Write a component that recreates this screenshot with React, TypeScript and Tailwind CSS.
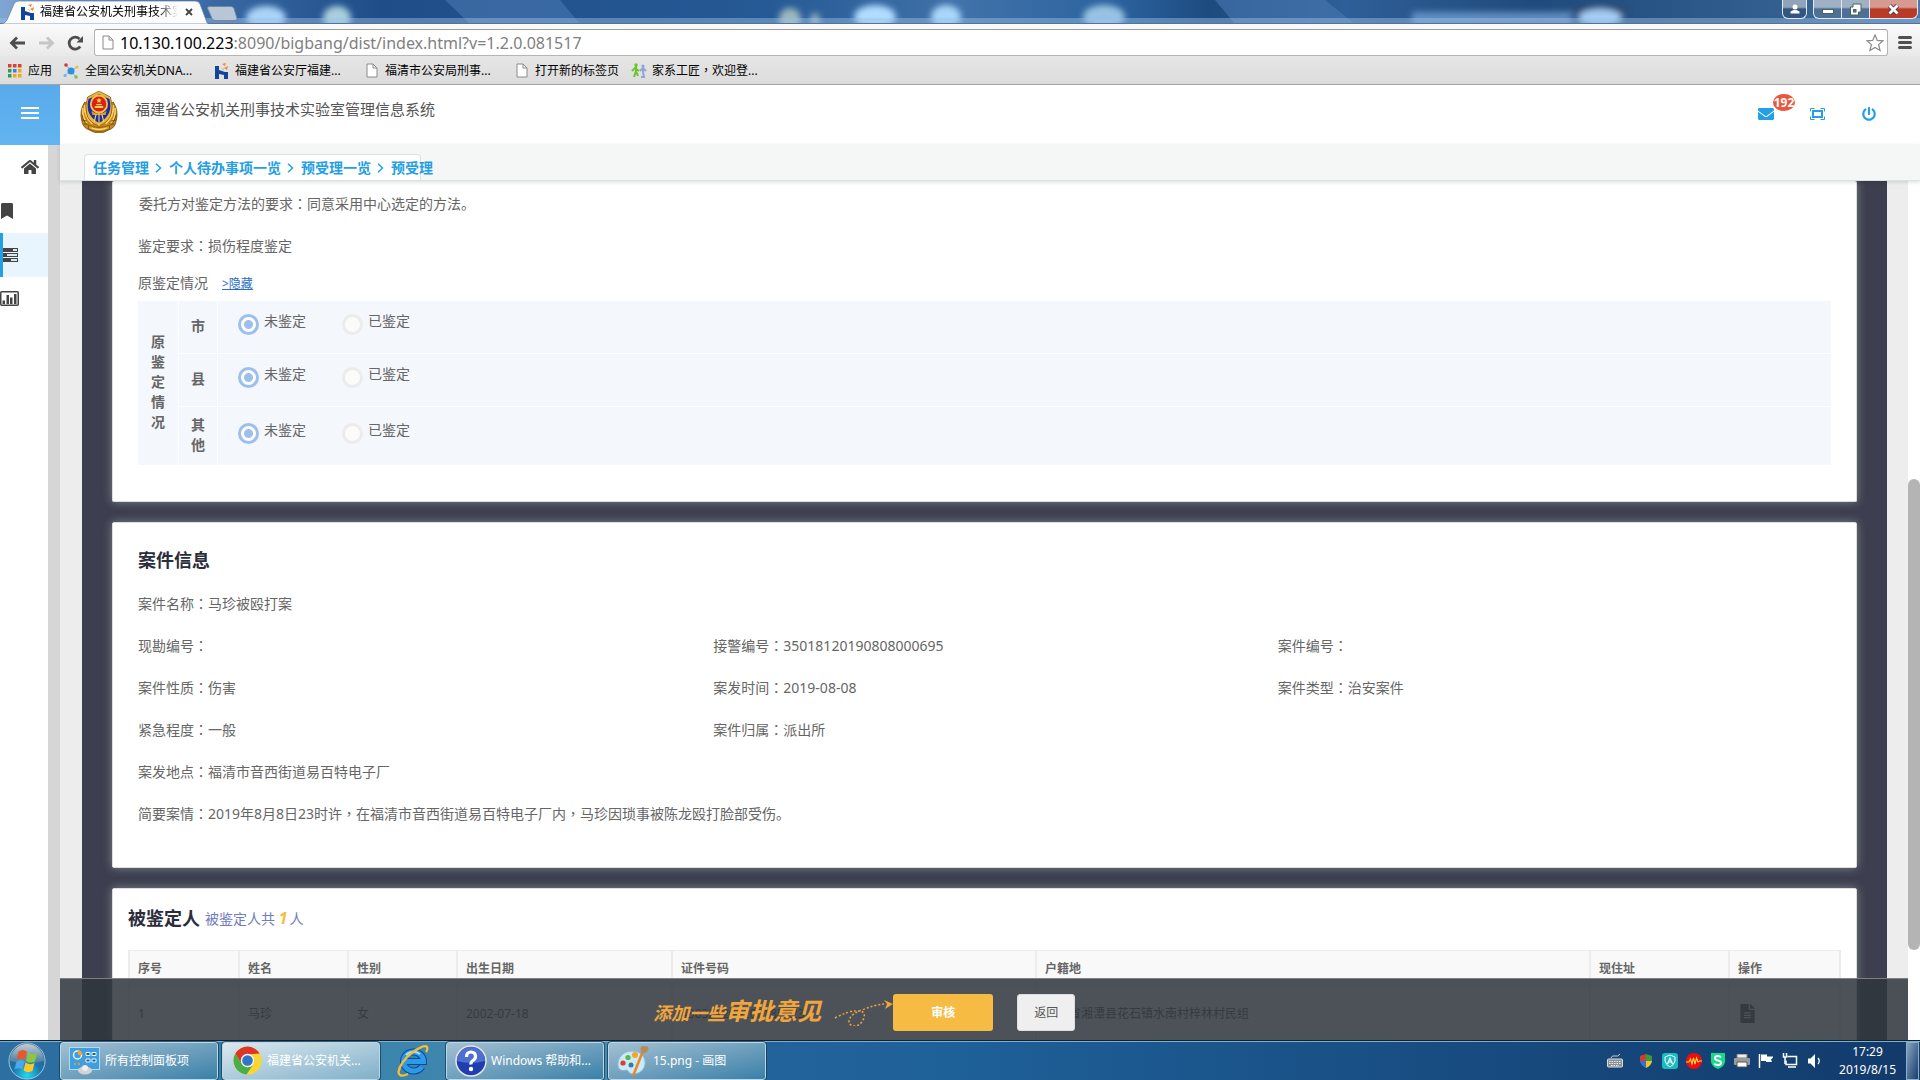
import React from "react";
import { FaHome, FaBookmark, FaEnvelope, FaPowerOff, FaFileAlt } from "react-icons/fa";

/* Full-width colon and comma, centred in their box */
const P = ({ c = "：" }: { c?: string }) => (
  <span className="font-['Noto_Sans_CJK_TC','Noto_Sans_CJK_SC',sans-serif]">{c}</span>
);

const Field = ({ label, children, className = "" }: { label: string; children?: React.ReactNode; className?: string }) => (
  <div className={"h-[42px] whitespace-nowrap leading-10 " + className}>
    {label}
    <P />
    {children}
  </div>
);

/* ---------- browser ---------- */

const HLogo = () => (
  <svg width="14" height="16" viewBox="0 0 14 16" aria-hidden="true">
    <path d="M0 3h4v4l6 2h3v7H9v-4l-5-1v5H0z" fill="#12459a" />
    <path d="M7 1l4-1-1 3zM9 5l4-2-1 4zM7 5l2 1-1 1z" fill="#f08a2c" />
  </svg>
);

const PageIcon = () => (
  <svg width="12" height="15" viewBox="0 0 12 15" aria-hidden="true">
    <path d="M1 1h6l4 4v9H1z" fill="#fff" stroke="#8a8a8a" />
    <path d="M7 1v4h4" fill="none" stroke="#8a8a8a" />
  </svg>
);

const TitleBar = () => (
  <div className="relative flex h-6 shrink-0 items-start overflow-hidden bg-[#2b5b92]">
    <svg className="absolute inset-0 h-full w-full" viewBox="0 0 1920 24" preserveAspectRatio="none" aria-hidden="true">
      <defs>
        <filter id="soft" x="-50%" y="-50%" width="200%" height="200%">
          <feGaussianBlur stdDeviation="3" />
        </filter>
        <linearGradient id="wall" x1="0" x2="1">
          <stop offset="0" stopColor="#7fa6d2" />
          <stop offset=".11" stopColor="#3a69a4" />
          <stop offset=".2" stopColor="#1f4d88" />
          <stop offset=".4" stopColor="#265a95" />
          <stop offset=".5" stopColor="#4172a9" />
          <stop offset=".58" stopColor="#2c639f" />
          <stop offset=".63" stopColor="#1d4b80" />
          <stop offset=".7" stopColor="#2f5f98" />
          <stop offset=".8" stopColor="#1f4a7c" />
          <stop offset=".93" stopColor="#33608f" />
          <stop offset="1" stopColor="#4e78a6" />
        </linearGradient>
      </defs>
      <rect width="1920" height="24" fill="url(#wall)" />
      <path d="M445 0h115l20 24H470zM1215 0h110l30 24h-120z" fill="#4a78b0" opacity=".6" />
      <g filter="url(#soft)">
        <ellipse cx="266" cy="18" rx="20" ry="12" fill="#a9d3f7" />
        <ellipse cx="337" cy="18" rx="14" ry="12" fill="#a8cfdd" />
        <ellipse cx="790" cy="19" rx="11" ry="11" fill="#9cb7bd" />
        <ellipse cx="815" cy="20" rx="5" ry="7" fill="#8fb0bd" />
        <ellipse cx="875" cy="17" rx="21" ry="12" fill="#b0dcff" />
        <ellipse cx="946" cy="17" rx="15" ry="12" fill="#a8d6f8" />
        <ellipse cx="1104" cy="17" rx="21" ry="12" fill="#97c2e2" />
        <rect x="1412" y="12" width="160" height="14" fill="#7ba5d8" opacity=".7" />
        <ellipse cx="1600" cy="11" rx="28" ry="7" fill="#2b4a70" />
        <ellipse cx="1600" cy="18" rx="22" ry="9" fill="#a5cdf5" />
      </g>
      <rect y="18" width="1920" height="5" fill="#9cc0ea" opacity=".45" />
      <rect y="23" width="1920" height="1" fill="#557395" />
    </svg>
    <div className="relative flex h-6 w-[209px] items-center pl-[21px]">
      <svg className="absolute inset-0 h-full w-full" viewBox="0 0 209 24" preserveAspectRatio="none" aria-hidden="true">
        <path d="M0 24q5 0 7-4L14 4q1-3 5-3h176q4 0 5 3l6 16q1 4 3 4z" fill="#fcfcfc" stroke="#5b7da8" strokeWidth=".7" />
      </svg>
      <div className="relative flex items-center">
        <HLogo />
        <span className="ml-[5px] w-[138px] overflow-hidden whitespace-nowrap bg-linear-to-r from-black from-85% to-transparent bg-clip-text text-xs text-transparent">
          福建省公安机关刑事技术实
        </span>
        <button aria-label="关闭标签页" className="ml-[7px]">
          <svg width="8" height="8" viewBox="0 0 8 8"><path d="M1 1l6 6M7 1L1 7" stroke="#444" strokeWidth="1.8" /></svg>
        </button>
      </div>
    </div>
    <button aria-label="新建标签页" className="relative -ml-[2px] mt-1.5">
      <svg width="31" height="15" viewBox="0 0 31 15"><path d="M2 .5h22q2 0 3 2l3 10q0 2-2 2H8q-2 0-3-2L.5 2Q.5.5 2 .5z" fill="#b9c6d6" stroke="#70879f" /></svg>
    </button>
    <div className="relative ml-auto mr-[2px] flex text-white">
      <button aria-label="用户" className="mr-1.5 flex h-[19px] w-[25px] items-center justify-center rounded-b-md border border-t-0 border-slate-200 bg-linear-to-b from-[#91a3b8] from-40% to-[#34567e] to-50%">
        <svg width="12" height="12" viewBox="0 0 12 12"><circle cx="6" cy="4" r="2.5" fill="#fff" /><path d="M1.500 10.500v-2l3-1.500h3l3 1.500v2z" fill="#fff" /></svg>
      </button>
      <button aria-label="最小化" className="flex h-[19px] w-[29px] items-center justify-center rounded-bl-md border border-t-0 border-slate-200 bg-linear-to-b from-[#a0b1c5] from-40% to-[#4f7094] to-50%">
        <svg width="12" height="12" viewBox="0 0 12 12"><rect x=".5" y="6.500" width="11" height="4" fill="#fff" stroke="#465" /></svg>
      </button>
      <button aria-label="还原" className="flex h-[19px] w-[27px] items-center justify-center border-b border-slate-200 bg-linear-to-b from-[#a0b1c5] from-40% to-[#4f7094] to-50%">
        <svg width="13" height="13" viewBox="0 0 13 13"><path d="M4 1h8v8H9.500v3H1.500V4H4z" fill="#fff" stroke="#465" /><rect x="4.500" y="6.500" width="2.500" height="2.500" fill="#579" stroke="#465" /></svg>
      </button>
      <button aria-label="关闭" className="flex h-[19px] w-[49px] items-center justify-center rounded-br-md border border-t-0 border-slate-200 bg-linear-to-b from-[#d79a90] from-40% to-[#b93a26] to-50%">
        <svg width="13" height="11" viewBox="0 0 13 11"><path d="M2.500 1.500l8 8M10.500 1.500l-8 8" stroke="#534" strokeWidth="4.500" /><path d="M2.500 1.500l8 8M10.500 1.500l-8 8" stroke="#fff" strokeWidth="2.800" /></svg>
      </button>
    </div>
  </div>
);

const Toolbar = () => (
  <div className="flex h-8 shrink-0 items-center bg-linear-to-b from-[#fbfbfb] to-[#e9e9e9] pl-[9px] pr-2 pt-[5px]">
    <button aria-label="后退"><svg width="17" height="14" viewBox="0 0 17 14"><path d="M16 7H3M8 1.500L2.500 7 8 12.500" fill="none" stroke="#4d4d4d" strokeWidth="2.800" /></svg></button>
    <button aria-label="前进" className="ml-3"><svg width="17" height="14" viewBox="0 0 17 14"><path d="M1 7h13M9 1.500L14.500 7 9 12.500" fill="none" stroke="#c6c6c6" strokeWidth="2.800" /></svg></button>
    <button aria-label="重新加载" className="ml-3"><svg width="17" height="16" viewBox="0 0 17 16"><path d="M13.200 11.500A6 6 0 1 1 12.500 4" fill="none" stroke="#4d4d4d" strokeWidth="2.800" /><path d="M16 1v6.500H9.500z" fill="#4d4d4d" /></svg></button>
    <div className="relative ml-[10px] flex h-[27px] flex-1 items-center rounded-[3px] border border-[#b5b5b5] border-t-[#9a9a9a] bg-white pl-[7px] pr-[3px]">
      <PageIcon />
      <span className="ml-1.5 flex-1 whitespace-nowrap text-base text-[#808080]">
        <span className="text-black">10.130.100.223</span>:8090/bigbang/dist/index.html?v=1.2.0.081517
      </span>
      <button aria-label="收藏"><svg width="18" height="18" viewBox="0 0 18 18"><path d="M9 1l2.300 5.400 5.700.4-4.400 3.800 1.500 5.900L9 13.400l-5.100 3.100 1.500-5.900L1 6.800l5.700-.4z" fill="#fff" stroke="#8a8a8a" strokeWidth="1.200" /></svg></button>
    </div>
    <button aria-label="菜单" className="ml-2.5 flex w-[14px] flex-col gap-[2px]">
      <span className="h-[3px] rounded-sm bg-[#505050]" />
      <span className="h-[3px] rounded-sm bg-[#505050]" />
      <span className="h-[3px] rounded-sm bg-[#505050]" />
    </button>
  </div>
);

const AppsIcon = () => (
  <svg width="14" height="14" viewBox="0 0 14 14" aria-hidden="true">
    <path d="M0 0h3.500v3.500H0zM5 0h3.500v3.500H5z" fill="#e0402f" /><path d="M10 0h3.500v3.500H10z" fill="#e0402f" />
    <path d="M0 5h3.500v3.500H0z" fill="#2e9e54" /><path d="M5 5h3.500v3.500H5z" fill="#3d7ee0" /><path d="M10 5h3.500v3.500H10z" fill="#f0a818" />
    <path d="M0 10h3.500v3.500H0z" fill="#2e9e54" /><path d="M5 10h3.500v3.500H5zM10 10h3.500v3.500H10z" fill="#f0a818" />
  </svg>
);

const DnaIcon = () => (
  <svg width="16" height="16" viewBox="0 0 16 16" aria-hidden="true">
    <path d="M3 2l5 6 6-4M8 8l-6 4M8 8l5 6" stroke="#9cc8ea" strokeWidth="1.500" fill="none" />
    <circle cx="8" cy="8" r="3.500" fill="#2f8fe0" /><circle cx="3" cy="2" r="1.800" fill="#e0322c" /><circle cx="14" cy="4" r="1.500" fill="#f0c020" /><circle cx="2" cy="12.500" r="1.500" fill="#6db0e8" /><circle cx="13" cy="14" r="1.700" fill="#7fc04a" />
  </svg>
);

const PeopleIcon = () => (
  <svg width="16" height="16" viewBox="0 0 16 16" aria-hidden="true">
    <path d="M5 3v5l-2 6M5 8l2 5M1 8l3-3 4 3" fill="none" stroke="#6cc52f" strokeWidth="2" /><circle cx="5" cy="2" r="1.800" fill="#6cc52f" />
    <path d="M12 4v5l1 5h-3M9 8l3-3 3 3" fill="none" stroke="#8fa6d6" strokeWidth="2" /><circle cx="12" cy="3" r="1.600" fill="#8fa6d6" />
  </svg>
);

const bookmarkClass = "flex items-center whitespace-nowrap";

const Bookmarks = () => (
  <nav aria-label="书签栏" className="flex h-[29px] shrink-0 items-center border-b border-[#a3a3a3] bg-linear-to-b from-[#e6e6e6] to-[#dcdcdc] pl-2 pt-px text-xs text-black">
    <a href="#apps" className={bookmarkClass + " w-[55px] gap-1.5"}><AppsIcon />应用</a>
    <a href="#dna" className={bookmarkClass + " w-[152px] gap-1.5"}><DnaIcon />全国公安机关DNA...</a>
    <a href="#ting" className={bookmarkClass + " w-[151px] gap-1.5"}><HLogo />福建省公安厅福建...</a>
    <a href="#ju" className={bookmarkClass + " w-[150px] gap-[7px]"}><PageIcon />福清市公安局刑事...</a>
    <a href="#new" className={bookmarkClass + " w-[115px] gap-[7px]"}><PageIcon />打开新的标签页</a>
    <a href="#jiaxi" className={bookmarkClass + " gap-[5px]"}><PeopleIcon /><span>家系工匠<P c="，" />欢迎登...</span></a>
  </nav>
);

/* ---------- application ---------- */

const Emblem = () => (
  <svg width="38" height="42" viewBox="0 0 40 42" preserveAspectRatio="none" aria-label="警徽">
    <path d="M5 11Q-1 20 2 30q1 7 8 9 5 3 10 3t10-3q7-2 8-9 3-10-3-19l-4 3H9z" fill="#c8861c" stroke="#6f4208" strokeWidth=".8" />
    <path d="M3 17q-1 10 6 18M5 14q-1 11 8 19M37 17q1 10-6 18M35 14q1 11-8 19" fill="none" stroke="#f7d768" strokeWidth="1.600" />
    <path d="M2 24q2 8 9 13M38 24q-2 8-9 13M2 29l5 1M4 33l5 0M38 29l-5 1M36 33l-5 0" fill="none" stroke="#7d4a0b" strokeWidth="1" />
    <path d="M20 0l4 2 8 4q3 9 1 16-2 9-13 13Q8 31 7 22 5 15 8 6l8-4z" fill="#e9b73c" stroke="#7d4a0b" strokeWidth=".7" />
    <path d="M20 3l11 5q2 8 0 13-3 7-11 11Q12 28 9 21 7 14 9 8z" fill="#1b2bb0" />
    <circle cx="20" cy="13" r="9.500" fill="#f2c53f" />
    <circle cx="20" cy="13" r="7.600" fill="#dc1d1a" />
    <path d="M20 6.500l.9 1.900 2 .2-1.500 1.400.4 2-1.800-1-1.800 1 .4-2-1.500-1.400 2-.2zM15.500 15h9v2h-9zM17 13h6v1.200h-6z" fill="#f7d34a" />
    <path d="M12 20q8 5 16 0l-1 4H13z" fill="#d9981f" />
    <path d="M20 22v13M17 23l-2 8M23 23l2 8" stroke="#f4d25e" strokeWidth="1.200" />
    <path d="M9 34q11 5 22 0v4q-11 5-22 0z" fill="#d99a24" stroke="#6f4208" strokeWidth=".7" />
    <path d="M12 37q8 3 16 0" fill="none" stroke="#f9e080" strokeWidth="1.200" />
  </svg>
);

const Header = () => (
  <header className="flex h-[60px] shrink-0">
    <button aria-label="展开菜单" className="flex w-[60px] flex-col items-center justify-center gap-[3px] bg-linear-to-b from-[#58aaeb] to-[#62b5f0] pb-1">
      <span className="h-[2px] w-[18px] bg-white" />
      <span className="h-[2px] w-[18px] bg-white" />
      <span className="h-[2px] w-[18px] bg-white" />
    </button>
    <div className="flex flex-1 items-start bg-white pl-5 pr-11">
      <div className="mt-1.5"><Emblem /></div>
      <h1 className="ml-[17px] mt-3 text-[15px] leading-6 text-[#555]">福建省公安机关刑事技术实验室管理信息系统</h1>
      <div className="ml-auto flex items-center pt-[21px] text-[#249ee4]">
        <button aria-label="消息" className="relative mr-9 flex h-4 items-center">
          <FaEnvelope size={16} />
          <span className="absolute -top-3 left-[15px] flex h-[17px] w-[22px] items-center justify-center rounded-[50%] bg-[#e9573f] text-xs font-bold text-white">192</span>
        </button>
        <button aria-label="全屏" className="mr-[37px]">
          <svg width="15" height="12" viewBox="0 0 15 12" fill="none" stroke="#249ee4"><path d="M.5 3.500v-3h4M10.500.5h4v3M14.500 8.500v3h-4M4.500 11.500h-4v-3" /><rect x="3" y="3" width="9" height="6" strokeWidth="2" /></svg>
        </button>
        <button aria-label="退出"><FaPowerOff size={14} /></button>
      </div>
    </div>
  </header>
);

const crumbs = ["任务管理", "个人待办事项一览", "预受理一览", "预受理"];

const Breadcrumb = () => (
  <nav aria-label="面包屑" className="relative z-10 flex h-9 shrink-0 items-end border-b border-[#d9e2e5] bg-[#f5f7f7] pl-6 shadow-[0_1px_4px_rgba(0,0,0,0.15)]">
    <div className="flex h-[26px] w-[337px] items-center rounded-t border border-b-0 border-[#dae2e4] bg-white pl-2 text-sm font-bold text-[#249ee4]">
      {crumbs.map((c, i) => (
        <React.Fragment key={c}>
          {i > 0 && (
            <svg className="w-5 shrink-0" height="10" viewBox="0 0 20 10" aria-hidden="true"><path d="M7 .8L11.500 5 7 9.200" fill="none" stroke="#249ee4" strokeWidth="1.500" /></svg>
          )}
          <a href={"#crumb" + i} className="whitespace-nowrap">{c}</a>
        </React.Fragment>
      ))}
    </div>
  </nav>
);

const Sidebar = () => (
  <aside className="flex w-[60px] shrink-0 border-r-[12px] border-[#d6d6d6] bg-white text-[#444]">
    <ul className="flex w-full flex-col">
      <li className="flex h-11 items-center pl-[21px]"><a href="#home" aria-label="首页"><FaHome size={18} /></a></li>
      <li className="flex h-11 items-center"><a href="#mark" aria-label="书签" className="-ml-px"><FaBookmark size={16} /></a></li>
      <li className="flex h-11 items-center border-l-[3px] border-[#249ee4] bg-[#e8f4fe]">
        <a href="#task" aria-label="任务">
          <svg width="15" height="14" viewBox="0 0 15 14"><path d="M0 0h15v4H0zM0 5h15v4H0zM0 10h15v4H0z" fill="#444" /><path d="M10 1h4v2h-4zM4 6h10v2H4zM8 11h6v2H8z" fill="#dbe6ef" /></svg>
        </a>
      </li>
      <li className="flex h-[42px] items-center">
        <a href="#stat" aria-label="统计">
          <svg width="19" height="15" viewBox="0 0 19 15"><rect x=".75" y=".75" width="17.500" height="13.500" rx="1" fill="none" stroke="#444" strokeWidth="1.500" /><path d="M2.500 9.500h2.500V13H2.500zM6.500 4h2.500v9H6.500zM10 6.500h2.500V13H10zM14 3h2.500v10H14z" fill="#444" /></svg>
        </a>
      </li>
    </ul>
  </aside>
);

const radioClass =
  "size-[21px] appearance-none rounded-full border-[3px] border-[#ececec] bg-[#fbfbfb] checked:border-[#9dbfee] checked:bg-[radial-gradient(circle,#9dbfee_4px,#ffffff_5px)]";

const levels = [
  { id: "city", text: "市", height: "h-[52px]" },
  { id: "county", text: "县", height: "h-[53px]" },
  { id: "other", text: "其他", height: "h-[59px]" },
];

const PriorTable = () => (
  <table className="w-full border-separate border-spacing-0 bg-[#f4f7fc] text-[#666]">
    <tbody>
      {levels.map((l, i) => (
        <tr key={l.id} className={l.height}>
          {i === 0 && (
            <th rowSpan={3} scope="rowgroup" className="w-10 px-[13px] pb-[2px] text-sm leading-5 font-bold">
              <span className="block w-[14px] break-all">原鉴定情况</span>
            </th>
          )}
          <th scope="row" className={"w-[39px] border-l border-white px-3 pb-[2px] text-sm leading-5 font-bold" + (i > 0 ? " border-t" : "")}>
            <span className="block w-[14px] break-all">{l.text}</span>
          </th>
          <td className={"border-l border-white pb-1.5 pl-5 align-middle" + (i > 0 ? " border-t" : "")}>
            <div className="flex gap-9">
              {["未鉴定", "已鉴定"].map((t, j) => (
                <label key={t} className="flex items-start gap-[5px] text-sm leading-[14px]">
                  <input type="radio" name={l.id} defaultChecked={j === 0} className={radioClass} />
                  {t}
                </label>
              ))}
            </div>
          </td>
        </tr>
      ))}
    </tbody>
  </table>
);

const cardClass = "rounded-[2px] border border-[#d9dddd] bg-white text-sm text-[#666] shadow-[0_0_10px_rgba(190,200,190,0.5)]";

const thClass = "border-l-2 border-t border-[#ececec] pl-2 text-left text-xs font-bold text-[#666]";
const tdClass = "border-l-2 border-t border-[#ececec] pl-2 text-left text-xs whitespace-nowrap text-[#555]";
const columns: [string, string, React.ReactNode][] = [
  ["序号", "w-[110px]", "1"],
  ["姓名", "w-[109px]", "马珍"],
  ["性别", "w-[109px]", "女"],
  ["出生日期", "w-[215px]", "2002-07-18"],
  ["证件号码", "w-[364px]", "430321200207185023"],
  ["户籍地", "", "湖南省湘潭县花石镇水南村梓林村民组"],
  ["现住址", "w-[139px]", ""],
  ["操作", "w-[111px]", <a key="f" href="#file" aria-label="查看"><FaFileAlt size={19} /></a>],
];

const Content = () => (
  <div className="relative flex flex-1 flex-col overflow-hidden bg-[#ededed] pl-[22px] pr-[21px]">
    <div className="flex flex-1 flex-col gap-5 bg-[#3d3f50] px-[30px]">
      <section className={cardClass + " border-t-0 px-[25px] pb-9 pt-[2px]"}>
        <Field label="委托方对鉴定方法的要求" className="pl-px">同意采用中心选定的方法。</Field>
        <Field label="鉴定要求">损伤程度鉴定</Field>
        <div className="h-[34px] leading-8">
          原鉴定情况<a href="#hide" className="ml-3.5 text-xs text-[#2a6cc4] underline">&gt;隐藏</a>
        </div>
        <PriorTable />
      </section>

      <section className={cardClass + " px-[25px] pb-8"}>
        <h2 className="h-[60px] pt-[14px] text-lg leading-[46px] font-bold text-[#2b2d3c]">案件信息</h2>
        <Field label="案件名称">马珍被殴打案</Field>
        <div className="grid grid-cols-[575fr_564fr_553fr]">
          <Field label="现勘编号" />
          <Field label="接警编号">35018120190808000695</Field>
          <Field label="案件编号" />
          <Field label="案件性质">伤害</Field>
          <Field label="案发时间">2019-08-08</Field>
          <Field label="案件类型">治安案件</Field>
          <Field label="紧急程度">一般</Field>
          <Field label="案件归属">派出所</Field>
        </div>
        <Field label="案发地点">福清市音西街道易百特电子厂</Field>
        <Field label="简要案情">
          2019年8月8日23时许<P c="，" />在福清市音西街道易百特电子厂内<P c="，" />马珍因琐事被陈龙殴打脸部受伤。
        </Field>
      </section>

      <section className={cardClass + " flex-1 px-[15px]"}>
        <div className="flex h-[61px] items-center gap-[5px] pb-1">
          <h2 className="text-lg font-bold text-[#2b2d3c]">被鉴定人</h2>
          <p className="text-sm text-[#6f7dbb]">被鉴定人共 <b className="mr-[2px] text-base text-[#f6bb42] italic">1</b>人</p>
        </div>
        <table className="w-full table-fixed border-separate border-spacing-0 border-r-2 border-[#ececec]">
          <thead>
            <tr className="h-9 bg-[#f9f9f9]">
              {columns.map(([h, w]) => <th key={h} scope="col" className={thClass + " " + w}>{h}</th>)}
            </tr>
          </thead>
          <tbody>
            <tr className="h-[54px]">
              {columns.map(([h, , v]) => <td key={h} className={tdClass}>{v}</td>)}
            </tr>
          </tbody>
        </table>
      </section>
    </div>

    <div className="absolute inset-x-0 bottom-0 flex h-[62px] items-start border-t border-[#7f817e] bg-[#30353d]/86 pl-[32%]">
      <div className="mt-3.5 ml-[2px] flex items-baseline leading-9 font-bold whitespace-nowrap text-[#f0a63c] italic">
        <span className="text-lg leading-9">添加一些</span>
        <span className="text-2xl leading-9">审批意见</span>
      </div>
      <svg className="mt-[15px] ml-[13px]" width="59" height="32" viewBox="0 0 59 32" fill="none" aria-hidden="true">
        <path d="M1 24Q14 17 22 17q10-1 8 7-4 9-11 8-6-2-3-8 3-5 12-8 12-5 22-6" stroke="#f0a63c" strokeWidth="1.500" strokeDasharray="2 2" />
        <path d="M50 6l9 4-8 5 2-5z" fill="#f0a63c" />
      </svg>
      <button className="mt-[15px] h-[37px] w-[100px] rounded-[3px] bg-[#f6bb42] text-xs font-bold text-white">审核</button>
      <button className="mt-[15px] ml-6 h-[37px] w-[58px] rounded-[3px] border border-[#ddd] bg-[#efefef] text-xs text-[#555]">返回</button>
    </div>
  </div>
);

/* ---------- desktop taskbar ---------- */

const StartOrb = () => (
  <svg width="38" height="38" viewBox="0 0 38 38" aria-hidden="true">
    <defs>
      <radialGradient id="orb" cx=".5" cy=".9" r=".9"><stop offset="0" stopColor="#25d6f5" /><stop offset=".45" stopColor="#1b75a8" /><stop offset="1" stopColor="#3c5870" /></radialGradient>
      <linearGradient id="orbShine" x1="0" y1="0" x2="0" y2="1"><stop offset="0" stopColor="#fff" stopOpacity=".7" /><stop offset="1" stopColor="#fff" stopOpacity=".1" /></linearGradient>
    </defs>
    <circle cx="19" cy="19" r="18" fill="url(#orb)" stroke="#9cc8e4" />
    <path d="M2 19a17 17 0 0 1 34 0q-17 5-34 0z" fill="url(#orbShine)" />
    <path d="M10.500 9.500q4-3 8.500 0l-2 8.500q-4-3-8.500 0z" fill="#e8582b" />
    <path d="M20 10.500q4.500 3 9 .5l-2 8.500q-5 2.500-9-.5z" fill="#8dc63f" />
    <path d="M8.500 19.500q4-3 8 0l-2 8q-4-2.500-8 0z" fill="#4aa9ea" />
    <path d="M17.500 20.500q4.500 3 9 .5l-2 8q-4.500 2.500-9-.5z" fill="#fbc926" />
  </svg>
);

const PanelIcon = () => (
  <svg width="32" height="28" viewBox="0 0 32 28" aria-hidden="true">
    <rect x=".5" y=".5" width="30" height="22" fill="#3f9edb" stroke="#a9def8" />
    <circle cx="8.500" cy="8" r="4" fill="none" stroke="#e6f6ff" strokeWidth="1.500" /><path d="M9 3v5h4.500Q14 4 9 3z" fill="#f8a229" />
    <path d="M17 5.500h4v3h-4zM23 5.500h4v3h-4zM17 12h4v3h-4zM23 12h4v3h-4z" fill="#1c5da0" stroke="#e6f6ff" />
    <circle cx="6" cy="17" r="1" fill="#f8a229" /><circle cx="10" cy="17" r="1" fill="#f8a229" />
    <ellipse cx="16" cy="23.500" rx="7" ry="4" fill="#d4d4d4" /><circle cx="16" cy="21" r="3" fill="#eee" />
  </svg>
);

const ChromeIcon = () => (
  <svg width="29" height="29" viewBox="0 0 29 29" aria-hidden="true">
    <circle cx="14.500" cy="14.500" r="14" fill="#fbd62e" />
    <path d="M2.400 7.500A14 14 0 0 1 26.600 7.500L14.500 8.500 8.400 18z" fill="#db3629" />
    <path d="M2.400 7.500A14 14 0 0 0 13.500 28.500l5.800-8.500-4.800 1.500L8.500 18z" fill="#4aae48" />
    <circle cx="14.500" cy="14.500" r="6.700" fill="#f3f3f3" /><circle cx="14.500" cy="14.500" r="5.300" fill="#2f76c9" />
  </svg>
);

const IeIcon = () => (
  <svg width="34" height="32" viewBox="0 0 34 32" aria-hidden="true">
    <path d="M26 21.500a10 9.500 0 1 1 1.500-5H10" fill="none" stroke="#0c4a9e" strokeWidth="7" />
    <path d="M26 21.500a10 9.500 0 1 1 1.500-5H10" fill="none" stroke="#2b9be8" strokeWidth="5" />
    <path d="M10 10q6-6 14-1" fill="none" stroke="#a6e0fb" strokeWidth="2" />
    <path d="M12 29Q3 33 2.500 27 4 17 17 7 29-1 31 2q1 2-1 5" fill="none" stroke="#f5bd32" strokeWidth="2.300" />
  </svg>
);

const HelpIcon = () => (
  <svg width="32" height="32" viewBox="0 0 32 32" aria-hidden="true">
    <circle cx="16" cy="16" r="15" fill="#1f3fae" stroke="#e6e6e6" strokeWidth="1.500" />
    <path d="M2 16a14 14 0 0 1 28 0q-14 4-28 0z" fill="#5f85df" opacity=".7" />
    <path d="M11.500 12q0-5 4.500-5t4.500 4.500q0 2.500-2.500 4t-2 4" fill="none" stroke="#fff" strokeWidth="3.200" /><circle cx="16" cy="24" r="2.200" fill="#fff" />
  </svg>
);

const PaintIcon = () => (
  <svg width="32" height="32" viewBox="0 0 32 32" aria-hidden="true">
    <path d="M15 6C5 6 0 14 1 21c1 5 6 5 8 4 3 0 2 4 7 4 8 0 13-6 12-13S21 6 15 6z" fill="#cbe9f7" stroke="#7fb9d8" />
    <circle cx="6" cy="18" r="2.600" fill="#dd3e2b" /><circle cx="11" cy="12.500" r="2.600" fill="#58b947" /><circle cx="18" cy="10" r="3" fill="#f5a623" /><circle cx="14" cy="20" r="2.500" fill="#2e7ea6" />
    <path d="M26 6L16 31" stroke="#e8872b" strokeWidth="2.500" /><path d="M24 6q-2-5 3-5 6 0 4 4-2 4-6 3z" fill="#b78b58" />
  </svg>
);

const TaskButton = ({ icon, text, active = false }: { icon: React.ReactNode; text: string; active?: boolean }) => (
  <button
    className={
      "flex h-[38px] w-[158px] items-center gap-1 overflow-hidden rounded-[3px] border border-[#bcd7e8] pl-2 text-xs whitespace-nowrap text-white outline outline-1 outline-[#12384f]/70 " +
      (active ? "bg-linear-to-br from-[#dbe8ef] to-[#7fb0c8]" : "bg-linear-to-br from-[#a3c0d2] to-[#3781a8]")
    }
  >
    <span className="flex w-8 shrink-0 justify-center">{icon}</span>
    {text}
  </button>
);

const Tray = () => (
  <div className="flex items-center">
    <svg width="16" height="16" viewBox="0 0 16 16" aria-label="键盘"><path d="M4 5q1-3 4-2t5-2" fill="none" stroke="#ccc" /><rect x=".5" y="6" width="15" height="8" rx="1" fill="#8a8f94" stroke="#ddd" /><path d="M2 8.500h12M2 10.500h12M4 12.500h8" stroke="#eee" strokeDasharray="1.500 1" /></svg>
    <svg className="ml-4" width="14" height="14" viewBox="0 0 14 14" aria-label="安全"><path d="M7 0l6 2v5q-1 5-6 7z" fill="#3d9a3b" /><path d="M7 0L1 2v5h6z" fill="#c9402c" /><path d="M7 7h6q-1 5-6 7z" fill="#f2c12e" /><path d="M7 7H1q1 5 6 7z" fill="#3d6fd0" /></svg>
    <svg className="ml-[9px]" width="16" height="16" viewBox="0 0 16 16" aria-label="认证"><rect width="16" height="16" rx="3" fill="#19bcc0" /><path d="M8 2l5 2v4q-1 4-5 6-4-2-5-6V4z" fill="none" stroke="#fff" /><path d="M5.500 11L8 5l2.500 6M6.500 9h3" fill="none" stroke="#fff" strokeWidth="1.200" /></svg>
    <svg className="ml-2" width="16" height="16" viewBox="0 0 16 16" aria-label="监测"><circle cx="8" cy="8" r="8" fill="#f40b0b" /><path d="M0 9h3l1.500-3L6 11l1.500-6L9 11l1.500-6L12 9l1.500-1H16" fill="none" stroke="#f6e23a" strokeWidth="1.100" /></svg>
    <svg className="ml-[9px]" width="14" height="16" viewBox="0 0 14 16" aria-label="杀毒"><path d="M0 0h14v9q-1 5-7 7-6-2-7-7z" fill="#17d98c" /><path d="M10 4.500Q9 3 7 3 4 3 4 5t3 2.500 3 2.500-3 2-3.500-1.500" fill="none" stroke="#fff" strokeWidth="2" /></svg>
    <svg className="ml-[9px]" width="16" height="14" viewBox="0 0 16 14" aria-label="打印机"><path d="M3 0h10v4H3z" fill="#eee" stroke="#777" /><rect y="4" width="16" height="7" rx="1" fill="#9b9b9b" /><path d="M3 8h10v5H3z" fill="#fff" stroke="#555" /></svg>
    <svg className="ml-2" width="16" height="15" viewBox="0 0 16 15" aria-label="操作中心"><path d="M1.500 1v14" stroke="#fff" strokeWidth="1.500" /><path d="M3 1.500h6v2h6v1l-2 2 1 2.500H8V8H3z" fill="#fff" /></svg>
    <svg className="ml-2" width="16" height="15" viewBox="0 0 16 15" aria-label="网络"><path d="M5.500 3.500h9v8H4v-4" fill="none" stroke="#fff" strokeWidth="1.500" /><path d="M1.500 0v4h3V0M3 4v7M6 14h8" fill="none" stroke="#fff" strokeWidth="1.500" /></svg>
    <svg className="ml-2.5" width="16" height="14" viewBox="0 0 16 14" aria-label="音量"><path d="M0 4.500h2.500L7 0v14L2.500 9.500H0z" fill="#fff" /><path d="M10 4q2.500 3 0 6" fill="none" stroke="#fff" strokeWidth="1.300" /></svg>
  </div>
);

const Taskbar = () => (
  <footer className="flex h-10 shrink-0 items-center border-t border-[#0e2233] bg-linear-to-r from-[#2c6fa0] via-[#1e6098] via-50% to-[#123a6b] shadow-[inset_0_1px_0_#7fb0d0]">
    <button aria-label="开始" className="ml-2"><StartOrb /></button>
    <div className="ml-3.5 flex items-center gap-1 bg-linear-to-r from-[#2c7ba6] to-[#4c8fb2]">
      <TaskButton icon={<PanelIcon />} text="所有控制面板项" />
      <TaskButton icon={<ChromeIcon />} text="福建省公安机关..." active />
      <button aria-label="Internet Explorer" className="flex w-[58px] justify-center"><IeIcon /></button>
      <TaskButton icon={<HelpIcon />} text="Windows 帮助和..." />
      <TaskButton icon={<PaintIcon />} text="15.png - 画图" />
    </div>
    <div className="ml-auto flex h-full items-center">
      <Tray />
      <time className="ml-[15px] text-center text-xs leading-[18px] text-white">17:29<br />2019/8/15</time>
      <button aria-label="显示桌面" className="ml-2.5 mr-px h-[38px] w-[13px] border border-[#8faccb] bg-linear-to-br from-[#8aa5c0] to-[#173e6c]" />
    </div>
  </footer>
);

export default function App() {
  return (
    <div className="flex h-screen flex-col overflow-hidden bg-white font-['Noto_Sans','Noto_Sans_CJK_SC',sans-serif]">
      <TitleBar />
      <Toolbar />
      <Bookmarks />
      <Header />
      <div className="flex min-h-0 flex-1">
        <Sidebar />
        <main className="flex min-w-0 flex-1 flex-col">
          <Breadcrumb />
          <div className="flex min-h-0 flex-1">
            <Content />
            <div className="flex w-3 shrink-0 flex-col bg-white">
              <div className="flex-[298]" />
              <div className="flex-[471] rounded-md bg-[#b4b4b4]" />
              <div className="flex-[90]" />
            </div>
          </div>
        </main>
      </div>
      <Taskbar />
    </div>
  );
}
